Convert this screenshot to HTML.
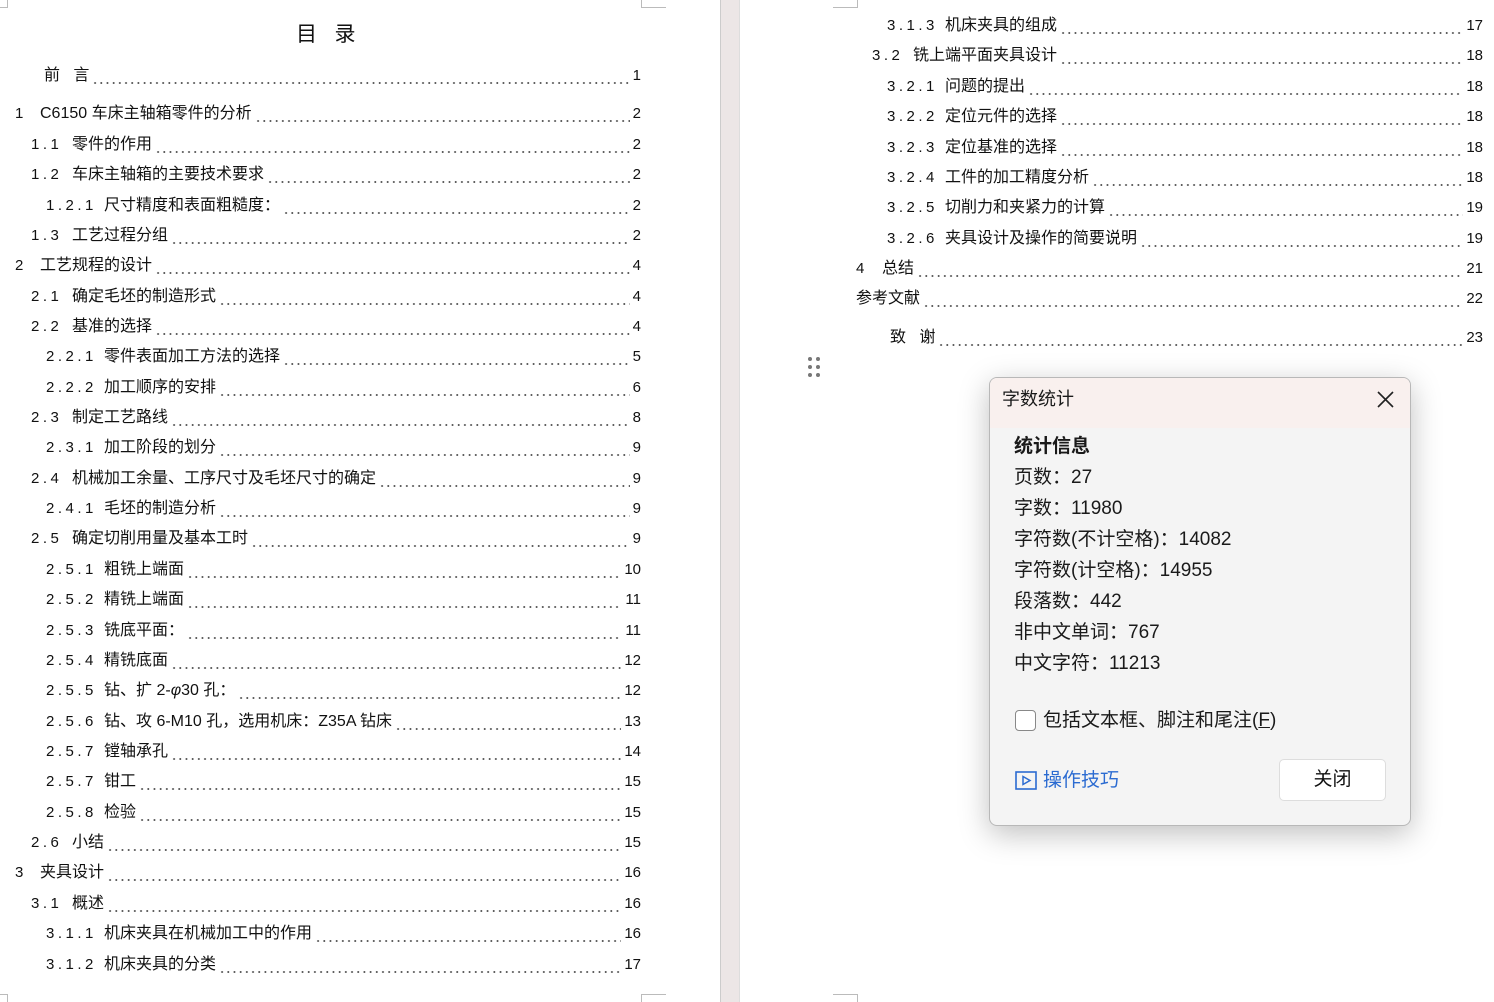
<!DOCTYPE html>
<html><head><meta charset="utf-8"><style>
*{margin:0;padding:0;box-sizing:border-box}
body{width:1494px;height:1002px;overflow:hidden;background:#fff;position:relative;font-family:"Liberation Sans","Noto Sans CJK SC",sans-serif;color:#111}
.gap{position:absolute;left:720px;top:0;width:20px;height:1002px;background:#ece6e6;border-left:1px solid #ccc;border-right:1px solid #ddd}
.cm{position:absolute;border-color:#bbb;border-style:solid;width:25px;height:8px}
.r{position:absolute;height:20px;font-size:16px;line-height:20px;white-space:nowrap}
.r .n{position:absolute;top:0;font-size:15px;letter-spacing:3.5px}
.r .b{position:absolute;top:0;display:flex;align-items:center}
.r .l{flex:1;height:20px;margin:0 3px;background-image:radial-gradient(circle,#555 0.8px,transparent 1.2px);background-size:6.2px 4px;background-repeat:repeat-x;background-position:0 15px}
.dlg{position:absolute;left:989px;top:377px;width:422px;height:449px;border:1px solid #b8b8b8;border-radius:8px;background:#f4f4f4;box-shadow:0 8px 30px rgba(0,0,0,.25);overflow:hidden;font-family:"Liberation Sans","Noto Sans CJK SC",sans-serif}
.hd{height:50px;background:#f9f0ee;position:relative}
.t{position:absolute;font-size:18px;line-height:24px;color:#1a1a1a}
</style></head><body>
<div class="gap"></div>
<div class="cm" style="left:-17px;top:0;border-width:0 1px 1px 0"></div>
<div class="cm" style="left:641px;top:0;border-width:0 0 1px 1px"></div>
<div class="cm" style="left:-17px;top:994px;border-width:1px 1px 0 0"></div>
<div class="cm" style="left:641px;top:994px;border-width:1px 0 0 1px"></div>
<div class="cm" style="left:833px;top:0;border-width:0 1px 1px 0"></div>
<div class="cm" style="left:833px;top:994px;border-width:1px 1px 0 0"></div>
<div style="position:absolute;left:296px;top:18px;font-size:21px;letter-spacing:0">目&nbsp;&nbsp;&nbsp;录</div>
<div id="toc"></div>
<div style="position:absolute;left:808px;top:356px;width:12px;height:22px">
<svg width="12" height="22"><g fill="#777"><circle cx="2" cy="3" r="2"/><circle cx="10" cy="3" r="2"/><circle cx="2" cy="11" r="2"/><circle cx="10" cy="11" r="2"/><circle cx="2" cy="19" r="2"/><circle cx="10" cy="19" r="2"/></g></svg></div>
<div class="dlg">
<div class="hd"><div class="t" style="left:12px;top:9px;font-size:18px">字数统计</div>
<svg style="position:absolute;left:387px;top:13px" width="17" height="17"><path d="M1 1L16 16M16 1L1 16" stroke="#222" stroke-width="1.6"/></svg></div>
<div class="t" style="left:24px;top:57px;font-weight:bold;font-size:19px">统计信息</div>
<div class="t" style="left:24px;top:88px;font-size:19px">页数：27</div>
<div class="t" style="left:24px;top:119px;font-size:19px">字数：11980</div>
<div class="t" style="left:24px;top:150px;font-size:19px">字符数(不计空格)：14082</div>
<div class="t" style="left:24px;top:181px;font-size:19px">字符数(计空格)：14955</div>
<div class="t" style="left:24px;top:212px;font-size:19px">段落数：442</div>
<div class="t" style="left:24px;top:243px;font-size:19px">非中文单词：767</div>
<div class="t" style="left:24px;top:274px;font-size:19px">中文字符：11213</div>
<div style="position:absolute;left:25px;top:332px;width:21px;height:21px;border:1px solid #888;border-radius:4px;background:#fff"></div>
<div class="t" style="left:53px;top:331px;font-size:19px">包括文本框、脚注和尾注(<u>F</u>)</div>
<svg style="position:absolute;left:25px;top:393px" width="22" height="19"><rect x="1" y="1" width="20" height="17" fill="none" stroke="#2b6bd1" stroke-width="1.6"/><path d="M8 5.5L15 9.5L8 13.5Z" fill="none" stroke="#2b6bd1" stroke-width="1.5"/></svg>
<div class="t" style="left:53px;top:391px;font-size:19px;color:#2b6bd1">操作技巧</div>
<div style="position:absolute;left:289px;top:381px;width:107px;height:42px;background:#fff;border:1px solid #ddd;border-radius:5px;font-size:19px;line-height:40px;text-align:center;color:#111">关闭</div>
</div>
<script>
const L=[
[75,44,null,"前&nbsp;&nbsp;&nbsp;言","1"],
[113,15,40,"C6150 车床主轴箱零件的分析","2","1"],
[144,31,72,"零件的作用","2","1.1"],
[174,31,72,"车床主轴箱的主要技术要求","2","1.2"],
[205,46,104,"尺寸精度和表面粗糙度：","2","1.2.1"],
[235,31,72,"工艺过程分组","2","1.3"],
[265,15,40,"工艺规程的设计","4","2"],
[296,31,72,"确定毛坯的制造形式","4","2.1"],
[326,31,72,"基准的选择","4","2.2"],
[356,46,104,"零件表面加工方法的选择","5","2.2.1"],
[387,46,104,"加工顺序的安排","6","2.2.2"],
[417,31,72,"制定工艺路线","8","2.3"],
[447,46,104,"加工阶段的划分","9","2.3.1"],
[478,31,72,"机械加工余量、工序尺寸及毛坯尺寸的确定","9","2.4"],
[508,46,104,"毛坯的制造分析","9","2.4.1"],
[538,31,72,"确定切削用量及基本工时","9","2.5"],
[569,46,104,"粗铣上端面","10","2.5.1"],
[599,46,104,"精铣上端面","11","2.5.2"],
[630,46,104,"铣底平面：","11","2.5.3"],
[660,46,104,"精铣底面","12","2.5.4"],
[690,46,104,"钻、扩 2-<i>φ</i>30 孔：","12","2.5.5"],
[721,46,104,"钻、攻 6-M10 孔，选用机床：Z35A 钻床","13","2.5.6"],
[751,46,104,"镗轴承孔","14","2.5.7"],
[781,46,104,"钳工","15","2.5.7"],
[812,46,104,"检验","15","2.5.8"],
[842,31,72,"小结","15","2.6"],
[872,15,40,"夹具设计","16","3"],
[903,31,72,"概述","16","3.1"],
[933,46,104,"机床夹具在机械加工中的作用","16","3.1.1"],
[964,46,104,"机床夹具的分类","17","3.1.2"]];
const R=[
[25,887,945,"机床夹具的组成","17","3.1.3"],
[55,872,913,"铣上端平面夹具设计","18","3.2"],
[86,887,945,"问题的提出","18","3.2.1"],
[116,887,945,"定位元件的选择","18","3.2.2"],
[147,887,945,"定位基准的选择","18","3.2.3"],
[177,887,945,"工件的加工精度分析","18","3.2.4"],
[207,887,945,"切削力和夹紧力的计算","19","3.2.5"],
[238,887,945,"夹具设计及操作的简要说明","19","3.2.6"],
[268,856,882,"总结","21","4"],
[298,856,null,"参考文献","22"],
[337,890,null,"致&nbsp;&nbsp;&nbsp;谢","23"]];
let h="";
function add(a,right){for(const[y,nx,tx,t,p,num]of a){const x=tx||nx;
h+=`<div class="r" style="top:${y-9}px;left:0;width:1494px">`+(num?`<span class="n" style="left:${nx}px">${num}</span>`:"")+
`<span class="b" style="left:${x}px;width:${right-x}px"><span>${t}</span><span class="l"></span><span style="font-size:15px">${p}</span></span></div>`;}}
add(L,641);add(R,1483);
document.getElementById("toc").innerHTML=h;
</script>
</body></html>
